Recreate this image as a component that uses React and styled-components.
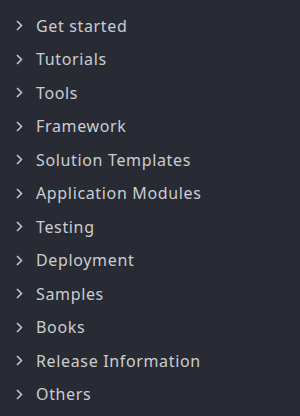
import styled, { createGlobalStyle } from "styled-components"

const items = [
  "Get started",
  "Tutorials",
  "Tools",
  "Framework",
  "Solution Templates",
  "Application Modules",
  "Testing",
  "Deployment",
  "Samples",
  "Books",
  "Release Information",
  "Others",
]

const Global = createGlobalStyle`
  html, body {
    margin: 0;
    padding: 0;
    background: #282b33;
  }
`

const Nav = styled.nav`
  width: 300px;
  height: 416px;
  background: #282b33;
  padding-top: 9px;
  box-sizing: border-box;
  overflow: hidden;
`

const List = styled.ul`
  list-style: none;
  margin: 0;
  padding: 0;
`

const Row = styled.li`
  display: flex;
  align-items: center;
  height: 33.5px;
  padding-left: 16px;
  color: #cbcdd2;
  font-family: "Noto Sans", sans-serif;
  font-size: 16px;
  font-weight: 400;
  letter-spacing: 0.65px;
  cursor: pointer;
  svg {
    flex: none;
    margin-right: 13px;
  }
`

const Chevron = () => (
  <svg width="7" height="11" viewBox="0 0 7 11" fill="none">
    <path d="M1 1l4.5 4.5L1 10" stroke="#c6c8ce" strokeWidth="1.5" />
  </svg>
)

const App = () => {
  return (
    <Nav>
      <Global />
      <List>
        {items.map((item) => (
          <Row key={item}>
            <Chevron />
            {item}
          </Row>
        ))}
      </List>
    </Nav>
  )
}

export default App
